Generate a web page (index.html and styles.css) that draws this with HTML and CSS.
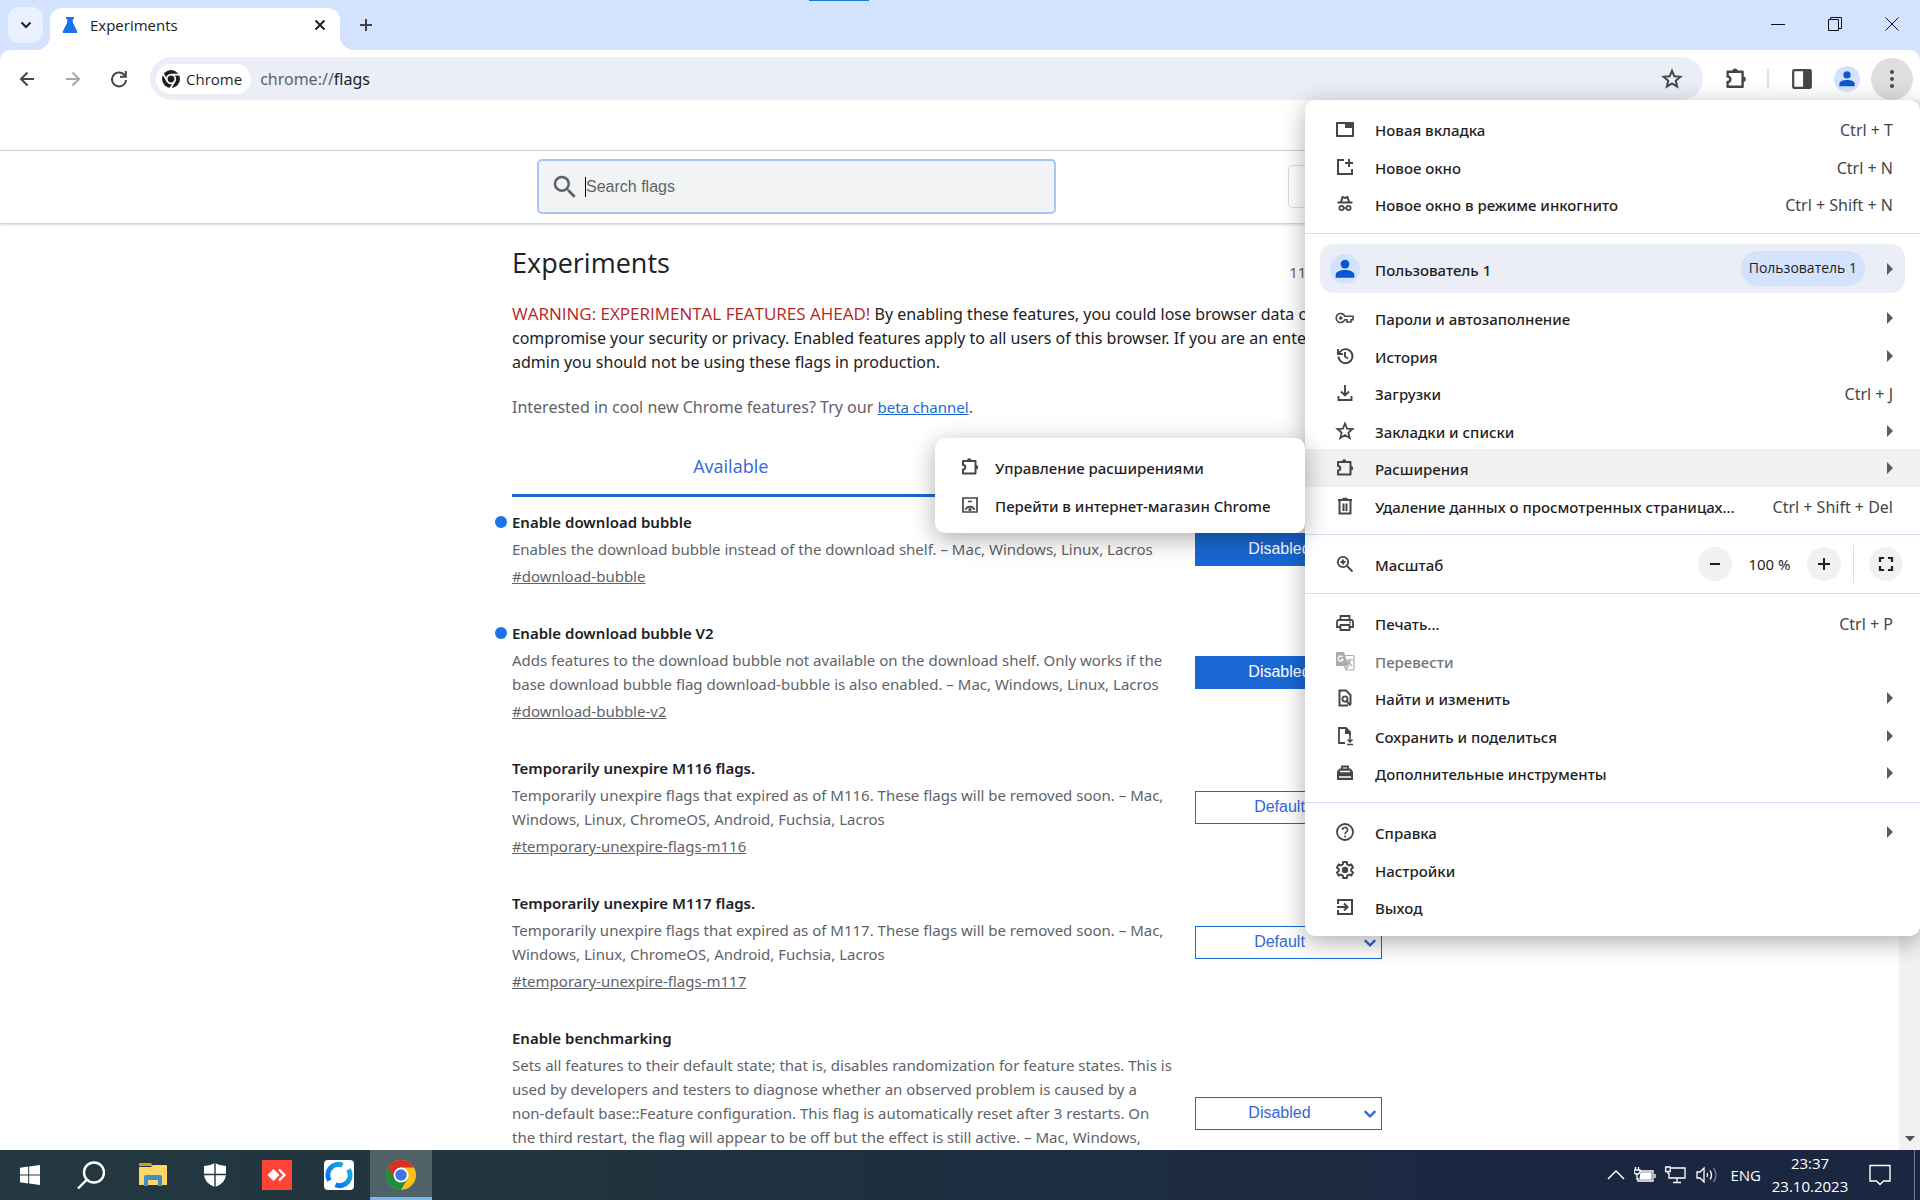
FILE: index.html
```html
<!DOCTYPE html>
<html lang="ru">
<head>
<meta charset="utf-8">
<title>Experiments</title>
<link rel="stylesheet" href="styles.css">
</head>
<body>
<svg class="sprite" aria-hidden="true">
  <symbol id="i-flask" viewBox="0 0 16 16"><path d="M4 0h8v2h-1.200v3.500L15 14q.8 2-1.200 2H2.200Q.2 16 1 14L5.200 5.500V2H4z"/></symbol>
  <symbol id="i-chevron" viewBox="0 0 12 12"><path d="M1.500 3.500 6 8l4.500-4.500" fill="none" stroke="currentColor" stroke-width="2"/></symbol>
  <symbol id="i-close" viewBox="0 0 12 12"><path d="m1.500 1.500 9 9m0-9-9 9" fill="none" stroke="currentColor" stroke-width="2"/></symbol>
  <symbol id="i-plus" viewBox="0 0 14 14"><path d="M7 1v12M1 7h12" fill="none" stroke="currentColor" stroke-width="2"/></symbol>
  <symbol id="i-minus" viewBox="0 0 14 14"><path d="M2 7h10" fill="none" stroke="currentColor" stroke-width="2"/></symbol>
  <symbol id="i-arrow" viewBox="0 0 20 20"><path d="M17 10H4m6.500-6.500L4 10l6.500 6.500" fill="none" stroke="currentColor" stroke-width="2"/></symbol>
  <symbol id="i-reload" viewBox="0 0 20 20"><path d="M17 11a7 7 0 1 1-2-5.500L16.500 7" fill="none" stroke="currentColor" stroke-width="2"/><path d="M17.800 2v6.800H11v-2h4.800V2z"/></symbol>
  <symbol id="i-chrome-mono" viewBox="0 0 20 20"><circle cx="10" cy="10" r="9"/><circle cx="10" cy="10" r="4.300" fill="none" stroke="#fff" stroke-width="1.700"/><path d="M10 5.700h9M6.300 12.100 1.800 4.500M13.700 12.100l-4.500 7.700" stroke="#fff" stroke-width="1.700"/></symbol>
  <symbol id="i-star" viewBox="0 0 20 20"><path d="m10 2.500 2.100 5.100 5.500.4-4.200 3.600 1.300 5.400-4.700-2.900L5.300 17l1.300-5.400L2.400 8l5.500-.4z" fill="none" stroke="currentColor" stroke-width="1.800"/></symbol>
  <symbol id="i-puzzle" viewBox="0 0 20 20"><path d="M3 4h12.500v12.500H3v-4c3 0 3-4.500 0-4.500z" fill="none" stroke="currentColor" stroke-width="2" stroke-linejoin="round"/><path d="M7 3.500a2.200 2.200 0 0 1 4.400 0zM16 8a2.200 2.200 0 0 1 0 4.400z"/></symbol>
  <symbol id="i-panel" viewBox="0 0 20 20"><rect x="2" y="2" width="16" height="16" rx="1" fill="none" stroke="currentColor" stroke-width="2"/><path d="M11 2h7v16h-7z"/></symbol>
  <symbol id="i-person" viewBox="0 0 20 20"><circle cx="10" cy="5.500" r="4"/><path d="M1.500 18v-2.500c0-3 4-4.500 8.500-4.500s8.500 1.500 8.500 4.500V18z"/></symbol>
  <symbol id="i-kebab" viewBox="0 0 20 20"><circle cx="10" cy="3" r="2"/><circle cx="10" cy="10" r="2"/><circle cx="10" cy="17" r="2"/></symbol>
  <symbol id="i-search" viewBox="0 0 24 24"><path d="M15.500 14h-.8l-.3-.3A6.500 6.500 0 1 0 13.700 14.400l.3.300v.8l5 5 1.500-1.500zm-6 0a4.500 4.500 0 1 1 0-9 4.500 4.500 0 0 1 0 9z"/></symbol>
  <symbol id="i-tab" viewBox="0 0 20 20"><path d="M2 4h16v13H2z" fill="none" stroke="currentColor" stroke-width="2" stroke-linejoin="round"/><path d="M10 4h8v5h-8z"/></symbol>
  <symbol id="i-window" viewBox="0 0 20 20"><path d="M9 3H3v14h14v-5M14 2v8M10 6h8" fill="none" stroke="currentColor" stroke-width="2"/></symbol>
  <symbol id="i-incognito" viewBox="0 0 20 20"><path d="M2.500 8.500h15M6 8l1.500-5 2.500 1 2.500-1L14 8" fill="none" stroke="currentColor" stroke-width="2"/><path d="M8.500 14h3" stroke="currentColor" stroke-width="1.500"/><circle cx="6.500" cy="14" r="2.200" fill="none" stroke="currentColor" stroke-width="1.700"/><circle cx="13.500" cy="14" r="2.200" fill="none" stroke="currentColor" stroke-width="1.700"/></symbol>
  <symbol id="i-key" viewBox="0 0 20 20"><path d="M9.800 8.200a4.500 4.500 0 1 0 0 3.600H12V14h4v-2.200h2V8.200z" fill="none" stroke="currentColor" stroke-width="1.600"/><circle cx="5.800" cy="10" r="1.800"/></symbol>
  <symbol id="i-history" viewBox="0 0 20 20"><path d="M3.500 10.500A7 7 0 1 0 5 5.800L3.500 7.500M3 3v5h5M10 6v4.500l3 2" fill="none" stroke="currentColor" stroke-width="1.900"/></symbol>
  <symbol id="i-download" viewBox="0 0 20 20"><path d="M10 2v10M6 8.500l4 4 4-4M3.500 13v4h13v-4" fill="none" stroke="currentColor" stroke-width="1.900"/></symbol>
  <symbol id="i-trash" viewBox="0 0 20 20"><path d="M4.500 5v12.500h11V5M3 4h14M7.500 2.800h5M8.500 7.500V15M11.500 7.500V15" fill="none" stroke="currentColor" stroke-width="2"/></symbol>
  <symbol id="i-zoom" viewBox="0 0 20 20"><circle cx="8" cy="8" r="5.200" fill="none" stroke="currentColor" stroke-width="1.800"/><path d="m12 12 5.500 5.500M8 5.500v5M5.500 8h5" fill="none" stroke="currentColor" stroke-width="1.800"/></symbol>
  <symbol id="i-print" viewBox="0 0 20 20"><path d="M5.500 6.500V3h9v3.500M5 14H2V9q0-2 2-2h12q2 0 2 2v5h-3M5.500 12h9v5h-9z" fill="none" stroke="currentColor" stroke-width="1.800"/><circle cx="15" cy="9.500" r="1"/></symbol>
  <symbol id="i-translate" viewBox="0 0 20 20"><path d="M2 1h7l4.500 14H2q-1 0-1-1V2q0-1 1-1z"/><path d="M10.500 4.500H18q1 0 1 1V18q0 1-1 1h-7l-1.500-4M12 9h6M15 7.500V9c0 2-1.500 4-3 5m0-4 5 5M11 18l2.500-3" fill="none" stroke="currentColor" stroke-width="1.200"/><path d="M7.500 6A2.500 2.500 0 1 0 8 8.500H5.800" fill="none" stroke="#fff" stroke-width="1.300"/></symbol>
  <symbol id="i-find" viewBox="0 0 20 20"><path d="M13 17.500H4.500v-15H11l4.500 4.500v9.500" fill="none" stroke="currentColor" stroke-width="2"/><circle cx="10" cy="11" r="2.600" fill="none" stroke="currentColor" stroke-width="1.800"/><path d="m11.500 13 4 4.500" stroke="currentColor" stroke-width="2"/></symbol>
  <symbol id="i-save" viewBox="0 0 20 20"><path d="M10 17H4V2h7l4 4v4" fill="none" stroke="currentColor" stroke-width="1.800"/><path d="M10 2h1.500L16 6.500V8h-6z"/><path d="M15 10v6m-2.500-2.500L15 16l2.500-2.500M12 18.500h6" fill="none" stroke="currentColor" stroke-width="1.500"/></symbol>
  <symbol id="i-tools" viewBox="0 0 20 20"><path d="M7 6.500V3.500h6v3" fill="none" stroke="currentColor" stroke-width="1.800"/><path d="M4.500 5.500h11L18 8.500V17H2V8.500z"/><path d="M5 8.500h10M4 14h12" stroke="#fff" stroke-width="1.300"/></symbol>
  <symbol id="i-help" viewBox="0 0 20 20"><circle cx="10" cy="10" r="8" fill="none" stroke="currentColor" stroke-width="1.800"/><path d="M7.500 8a2.500 2.500 0 1 1 3.700 2.100Q10 10.800 10 12.200" fill="none" stroke="currentColor" stroke-width="1.600"/><circle cx="10" cy="14.500" r="1"/></symbol>
  <symbol id="i-gear" viewBox="0 0 20 20"><path d="m8.300 2-.5 2.300-1.900 1.100-2.200-.8L2 7.600l1.800 1.500v1.800L2 12.400l1.700 3 2.200-.8 1.900 1.100.5 2.300h3.400l.5-2.300 1.900-1.100 2.200.8 1.700-3-1.800-1.500V9.100L18 7.600l-1.700-3-2.200.8-1.900-1.100-.5-2.300z" fill="none" stroke="currentColor" stroke-width="2"/><circle cx="10" cy="10" r="3.200"/></symbol>
  <symbol id="i-exit" viewBox="0 0 20 20"><path d="M3 7V3h14v14H3v-4M2 10h10.500M9 6.500l3.500 3.500L9 13.500" fill="none" stroke="currentColor" stroke-width="2"/></symbol>
  <symbol id="i-full" viewBox="0 0 16 16"><path d="M2 6V2h4M10 2h4v4M14 10v4h-4M6 14H2v-4" fill="none" stroke="currentColor" stroke-width="2.200"/></symbol>
  <symbol id="i-store" viewBox="0 0 20 20"><path d="M3 3h14v14H3zM8 6.500h4" fill="none" stroke="currentColor" stroke-width="1.700"/><path d="M5.500 15a4.700 4.700 0 0 1 9 0" fill="none" stroke="currentColor" stroke-width="1.600"/><circle cx="10" cy="14.500" r="1.600"/></symbol>
</svg>

<header class="titlebar">
  <button class="tab-search" aria-label="Поиск вкладок"><svg class="s12"><use href="#i-chevron"/></svg></button>
  <div class="tab">
    <svg class="s16 flask"><use href="#i-flask"/></svg>
    <span class="tab-title">Experiments</span>
    <button class="plain" aria-label="Закрыть"><svg class="s12"><use href="#i-close"/></svg></button>
  </div>
  <button class="plain new-tab" aria-label="Новая вкладка"><svg class="s14"><use href="#i-plus"/></svg></button>
  <div class="win-controls">
    <button class="plain" aria-label="Свернуть"><svg class="s14 line" viewBox="0 0 14 14"><path d="M0 7.500h14" stroke="#111"/></svg></button>
    <button class="plain" aria-label="Развернуть"><svg class="s14 line" viewBox="0 0 14 14" stroke="#111"><path d="M.5 2.500h10v11H.5zM2.500 2.500v-2h11v11h-3"/></svg></button>
    <button class="plain" aria-label="Закрыть окно"><svg class="s14 line" viewBox="0 0 14 14"><path d="m.5.500 13 13m0-13-13 13" stroke="#111"/></svg></button>
  </div>
  <span class="loader"></span>
</header>

<nav class="toolbar">
  <button class="plain nav-btn" aria-label="Назад"><svg class="s20"><use href="#i-arrow"/></svg></button>
  <button class="plain nav-btn forward" aria-label="Вперед"><svg class="s20"><use href="#i-arrow"/></svg></button>
  <button class="plain nav-btn" aria-label="Обновить"><svg class="s20"><use href="#i-reload"/></svg></button>
  <div class="omnibox">
    <span class="chip"><svg class="s20"><use href="#i-chrome-mono"/></svg>Chrome</span>
    <span class="url">chrome://<b>flags</b></span>
    <button class="plain" aria-label="Добавить закладку"><svg class="s22"><use href="#i-star"/></svg></button>
  </div>
  <button class="plain tool-btn" aria-label="Расширения"><svg class="s24"><use href="#i-puzzle"/></svg></button>
  <span class="tool-sep"></span>
  <button class="plain tool-btn" aria-label="Боковая панель"><svg class="s22"><use href="#i-panel"/></svg></button>
  <button class="plain avatar" aria-label="Профиль"><svg class="s18"><use href="#i-person"/></svg></button>
  <button class="plain kebab" aria-label="Меню"><svg class="s20"><use href="#i-kebab"/></svg></button>
</nav>

<div class="viewport">
  <main class="page">
    <div class="banner"></div>
    <div class="flag-header">
      <div class="flag-header-inner">
        <label class="search"><svg class="s30"><use href="#i-search"/></svg><span class="caret"></span><input type="search" placeholder="Search flags" aria-label="Search flags"></label>
        <button class="reset" aria-label="Reset all"></button>
      </div>
    </div>
    <div class="content">
      <div class="heading"><h1>Experiments</h1><span class="version">118.0.5993.89</span></div>
      <p class="blurb"><span class="warning">WARNING: EXPERIMENTAL FEATURES AHEAD!</span> By enabling these features, you could lose browser data or<br>compromise your security or privacy. Enabled features apply to all users of this browser. If you are an enterprise<br>admin you should not be using these flags in production.</p>
      <p class="promo">Interested in cool new Chrome features? Try our <a href="#beta">beta channel</a>.</p>
      <div class="tabs"><button class="flag-tab active">Available</button><button class="flag-tab" aria-label="Unavailable"></button></div>

      <section class="flag changed">
        <div class="flag-text">
          <h2>Enable download bubble</h2>
          <p>Enables the download bubble instead of the download shelf. – Mac, Windows, Linux, Lacros</p>
          <a href="#download-bubble">#download-bubble</a>
        </div>
        <div class="pick on"><select aria-label="Enable download bubble"><option>Disabled</option></select><svg class="s14"><use href="#i-chevron"/></svg></div>
      </section>
      <section class="flag changed">
        <div class="flag-text">
          <h2>Enable download bubble V2</h2>
          <p>Adds features to the download bubble not available on the download shelf. Only works if the<br>base download bubble flag download-bubble is also enabled. – Mac, Windows, Linux, Lacros</p>
          <a href="#download-bubble-v2">#download-bubble-v2</a>
        </div>
        <div class="pick on"><select aria-label="Enable download bubble V2"><option>Disabled</option></select><svg class="s14"><use href="#i-chevron"/></svg></div>
      </section>
      <section class="flag">
        <div class="flag-text">
          <h2>Temporarily unexpire M116 flags.</h2>
          <p>Temporarily unexpire flags that expired as of M116. These flags will be removed soon. – Mac,<br>Windows, Linux, ChromeOS, Android, Fuchsia, Lacros</p>
          <a href="#temporary-unexpire-flags-m116">#temporary-unexpire-flags-m116</a>
        </div>
        <div class="pick"><select aria-label="Temporarily unexpire M116 flags"><option>Default</option></select><svg class="s14"><use href="#i-chevron"/></svg></div>
      </section>
      <section class="flag">
        <div class="flag-text">
          <h2>Temporarily unexpire M117 flags.</h2>
          <p>Temporarily unexpire flags that expired as of M117. These flags will be removed soon. – Mac,<br>Windows, Linux, ChromeOS, Android, Fuchsia, Lacros</p>
          <a href="#temporary-unexpire-flags-m117">#temporary-unexpire-flags-m117</a>
        </div>
        <div class="pick"><select aria-label="Temporarily unexpire M117 flags"><option>Default</option></select><svg class="s14"><use href="#i-chevron"/></svg></div>
      </section>
      <section class="flag">
        <div class="flag-text">
          <h2>Enable benchmarking</h2>
          <p>Sets all features to their default state; that is, disables randomization for feature states. This is<br>used by developers and testers to diagnose whether an observed problem is caused by a<br>non-default base::Feature configuration. This flag is automatically reset after 3 restarts. On<br>the third restart, the flag will appear to be off but the effect is still active. – Mac, Windows,<br>Linux, ChromeOS, Android, Fuchsia, Lacros</p>
          <a href="#enable-benchmarking">#enable-benchmarking</a>
        </div>
        <div class="pick"><select aria-label="Enable benchmarking"><option>Disabled</option></select><svg class="s14"><use href="#i-chevron"/></svg></div>
      </section>
    </div>
  </main>
  <div class="scrollbar"><svg viewBox="0 0 10 6" class="scroll-arrow"><path d="M0 0h10L5 5.500z"/></svg></div>
</div>

<div class="menu" role="menu">
  <div class="group">
    <div class="row" role="menuitem"><svg class="s20"><use href="#i-tab"/></svg><span class="label">Новая вкладка</span><kbd>Ctrl + T</kbd></div>
    <div class="row" role="menuitem"><svg class="s20"><use href="#i-window"/></svg><span class="label">Новое окно</span><kbd>Ctrl + N</kbd></div>
    <div class="row" role="menuitem"><svg class="s20"><use href="#i-incognito"/></svg><span class="label">Новое окно в режиме инкогнито</span><kbd>Ctrl + Shift + N</kbd></div>
  </div>
  <div class="group profile-group">
    <div class="profile" role="menuitem"><span class="face"><svg class="s22"><use href="#i-person"/></svg></span><span class="label">Пользователь 1</span><span class="badge">Пользователь 1</span><i class="more"></i></div>
  </div>
  <div class="group no-rule">
    <div class="row" role="menuitem"><svg class="s20"><use href="#i-key"/></svg><span class="label">Пароли и автозаполнение</span><i class="more"></i></div>
    <div class="row" role="menuitem"><svg class="s20"><use href="#i-history"/></svg><span class="label">История</span><i class="more"></i></div>
    <div class="row" role="menuitem"><svg class="s20"><use href="#i-download"/></svg><span class="label">Загрузки</span><kbd>Ctrl + J</kbd></div>
    <div class="row" role="menuitem"><svg class="s20"><use href="#i-star"/></svg><span class="label">Закладки и списки</span><i class="more"></i></div>
    <div class="row active" role="menuitem"><svg class="s20"><use href="#i-puzzle"/></svg><span class="label">Расширения</span><i class="more"></i></div>
    <div class="row" role="menuitem"><svg class="s20"><use href="#i-trash"/></svg><span class="label">Удаление данных о просмотренных страницах...</span><kbd>Ctrl + Shift + Del</kbd></div>
  </div>
  <div class="group zoom-row">
    <svg class="s20"><use href="#i-zoom"/></svg><span class="label">Масштаб</span>
    <button class="round" aria-label="Уменьшить"><svg class="s14"><use href="#i-minus"/></svg></button>
    <span class="percent">100 %</span>
    <button class="round" aria-label="Увеличить"><svg class="s14"><use href="#i-plus"/></svg></button>
    <span class="zoom-sep"></span>
    <button class="round" aria-label="Во весь экран"><svg class="s16"><use href="#i-full"/></svg></button>
  </div>
  <div class="group">
    <div class="row" role="menuitem"><svg class="s20"><use href="#i-print"/></svg><span class="label">Печать...</span><kbd>Ctrl + P</kbd></div>
    <div class="row disabled" role="menuitem"><svg class="s20"><use href="#i-translate"/></svg><span class="label">Перевести</span></div>
    <div class="row" role="menuitem"><svg class="s20"><use href="#i-find"/></svg><span class="label">Найти и изменить</span><i class="more"></i></div>
    <div class="row" role="menuitem"><svg class="s20"><use href="#i-save"/></svg><span class="label">Сохранить и поделиться</span><i class="more"></i></div>
    <div class="row" role="menuitem"><svg class="s20"><use href="#i-tools"/></svg><span class="label">Дополнительные инструменты</span><i class="more"></i></div>
  </div>
  <div class="group">
    <div class="row" role="menuitem"><svg class="s20"><use href="#i-help"/></svg><span class="label">Справка</span><i class="more"></i></div>
    <div class="row" role="menuitem"><svg class="s20"><use href="#i-gear"/></svg><span class="label">Настройки</span></div>
    <div class="row" role="menuitem"><svg class="s20"><use href="#i-exit"/></svg><span class="label">Выход</span></div>
  </div>
</div>
<div class="menu submenu" role="menu">
  <div class="group">
    <div class="row" role="menuitem"><svg class="s20"><use href="#i-puzzle"/></svg><span class="label">Управление расширениями</span></div>
    <div class="row" role="menuitem"><svg class="s20"><use href="#i-store"/></svg><span class="label">Перейти в интернет-магазин Chrome</span></div>
  </div>
</div>

<footer class="taskbar">
  <button class="task" aria-label="Пуск"><svg width="20" height="20" viewBox="0 0 20 20"><path d="M0 2.800 8.200 1.600v7.900H0zM9.200 1.400 20 0v9.500H9.200zM0 10.500h8.200v8L0 17.300zM9.200 10.500H20V20L9.200 18.600z"/></svg></button>
  <button class="task" aria-label="Поиск"><svg class="line" width="28" height="28" viewBox="0 0 28 28" stroke="#fff" stroke-width="2.400"><circle cx="17" cy="11.500" r="10"/><path d="M10 18.500 1 27.500"/></svg></button>
  <button class="task" aria-label="Проводник"><svg width="28" height="24" viewBox="0 0 28 24"><path d="M0 1q0-1 1-1h11l2 3H0z" fill="#d99a0b"/><path d="M0 4h12l2-2h13q1 0 1 1v19H0z" fill="#fcd667"/><path d="M5 23v-9q0-2 2-2h14q2 0 2 2v9h-4v-6H9v6z" fill="#3f8fd0"/></svg></button>
  <button class="task" aria-label="Защитник"><svg width="22" height="24" viewBox="0 0 22 24"><path d="M11 0q5 3 11 3v8q0 9-11 13Q0 20 0 11V3q6 0 11-3z" fill="#fff"/><path d="M11 0v24M0 11.500h22" stroke="#233840" stroke-width="1.400"/></svg></button>
  <button class="task" aria-label="AnyDesk"><svg width="30" height="30" viewBox="0 0 30 30"><path d="M0 0h30v30H0z" fill="#fd4437"/><path d="m11.500 9 6 6-6 6-6-6z" fill="#fff"/><path d="m17 9.500 5.500 5.500-5.500 5.500" fill="none" stroke="#fff" stroke-width="2.200"/></svg></button>
  <button class="task" aria-label="RustDesk"><svg width="30" height="30" viewBox="0 0 30 30"><defs><linearGradient id="rd" x1="0" y1="1" x2="1" y2="0"><stop offset="0" stop-color="#0a66f5"/><stop offset="1" stop-color="#19b6df"/></linearGradient></defs><rect width="30" height="30" rx="4" fill="#fff"/><path d="M5.500 20.500A10.500 10.500 0 0 1 18.500 5.200M24.500 9.500A10.500 10.500 0 0 1 11.500 24.800" fill="none" stroke="url(#rd)" stroke-width="5"/></svg></button>
  <button class="task current" aria-label="Chrome"><svg width="30" height="30" viewBox="0 0 30 30"><circle cx="15" cy="15" r="15" fill="#fbc116"/><path d="M15 15 2 7.500A15 15 0 0 0 15 30l6.500-11.200z" fill="#1e8e3e"/><path d="M2 7.500a15 15 0 0 1 26 0H15v7.500l-6.500 3.700z" fill="#d93025"/><circle cx="15" cy="15" r="7.500" fill="#fff"/><circle cx="15" cy="15" r="5.800" fill="#3b78e7"/></svg></button>
  <div class="tray">
    <svg class="line" width="18" height="10" viewBox="0 0 18 10" stroke="#fff" stroke-width="1.500"><path d="m1 9 8-8 8 8"/></svg>
    <svg class="line" width="22" height="16" viewBox="0 0 22 16" stroke="#fff" stroke-width="1.300"><path d="M6 4h13v10H4v-3M21 7v4"/><path d="M7 6h10v6H6z" fill="#fff"/><path d="M1.500 0v3M4.500 0v3M0 3h6v2L4.500 7h-3L0 5zM3 7v6"/></svg>
    <svg class="line" width="22" height="18" viewBox="0 0 22 18" stroke="#fff" stroke-width="1.300"><path d="M6 2h14v10H4V7M12 12v4M8 16.500h8M.7 1h4.500v4.500H.7zM3 5.500V8"/></svg>
    <svg class="line" width="22" height="18" viewBox="0 0 22 18" stroke="#fff" stroke-width="1.300"><path d="M1 6h3l4-4v14l-4-4H1zM11 7q1.300 2 0 4M14 4.500q3 4.500 0 9"/><path d="M17.500 2q5 7 0 14" stroke="#73809a"/></svg>
    <span class="lang">ENG</span>
    <time class="clock">23:37<br>23.10.2023</time>
    <svg class="line" width="22" height="22" viewBox="0 0 22 22" stroke="#fff" stroke-width="1.400"><path d="M1 1.500h20v15.500h-6.500L11 20.500 7.500 17H1z"/></svg>
    <span class="peek"></span>
  </div>
</footer>
</body>
</html>
```
FILE: styles.css
```css
* { box-sizing: border-box; }
html, body { height: 100%; }
body {
  margin: 0;
  display: flex;
  flex-direction: column;
  overflow: hidden;
  position: relative;
  background: #d3e3fd;
  color: #202124;
  font: 16px/24px "Noto Sans", "Open Sans", sans-serif;
}
button, input, select { font: inherit; color: inherit; }
svg { display: block; flex: none; fill: currentColor; }
.line { fill: none; }
.sprite { position: absolute; width: 0; height: 0; }
.s12 { width: 12px; height: 12px; }
.s14 { width: 14px; height: 14px; }
.s16 { width: 16px; height: 16px; }
.s18 { width: 18px; height: 18px; }
.s20 { width: 20px; height: 20px; }
.s22 { width: 22px; height: 22px; }
.s24 { width: 24px; height: 24px; }
.s30 { width: 30px; height: 30px; }
.plain {
  display: flex;
  align-items: center;
  justify-content: center;
  flex: none;
  padding: 0;
  border: 0;
  background: none;
}

/* Title bar */
.titlebar { position: relative; display: flex; height: 50px; padding-left: 8px; flex: none; font-family: "Open Sans", sans-serif; }
.tab-search {
  display: flex;
  align-items: center;
  justify-content: center;
  width: 35px;
  height: 36px;
  margin: 7px 7px 0 0;
  padding: 0;
  border: 0;
  border-radius: 11px;
  background: #e9f1fe;
}
.tab {
  position: relative;
  display: flex;
  align-items: center;
  width: 290px;
  height: 42px;
  margin-top: 8px;
  padding: 0 14px 8px 12px;
  border-radius: 12px 12px 0 0;
  background: #fff;
}
.tab::before, .tab::after {
  content: "";
  position: absolute;
  bottom: 0;
  width: 14px;
  height: 14px;
}
.tab::before { right: 100%; background: radial-gradient(circle at 0 0, transparent 14px, #fff 14px); }
.tab::after { left: 100%; background: radial-gradient(circle at 100% 0, transparent 14px, #fff 14px); }
.flask { color: #1a73e8; }
.tab-title { flex: 1; margin-left: 12px; font-size: 15px; }
.new-tab { width: 52px; height: 50px; color: #444; }
.win-controls { display: flex; margin-left: auto; }
.win-controls .plain { width: 57px; height: 48px; }
.loader { position: absolute; left: 809px; top: 0; width: 60px; height: 1px; background: #1a7fd0; }

/* Toolbar */
.toolbar {
  display: flex;
  align-items: center;
  flex: none;
  height: 50px;
  padding: 7px 7px 0 4px;
  border-radius: 10px 10px 0 0;
  background: #fff;
  color: #444746;
}
.nav-btn { width: 46px; height: 43px; }
.forward { color: #a9a9a9; }
.forward svg { transform: scaleX(-1); }
.omnibox {
  flex: 1;
  display: flex;
  align-items: center;
  height: 43px;
  margin-left: 8px;
  padding: 0 20px 0 6px;
  border-radius: 22px;
  background: #ebeef7;
}
.chip {
  display: flex;
  align-items: center;
  gap: 5px;
  height: 30px;
  padding: 0 9px 0 5px;
  border-radius: 15px;
  background: #fff;
  color: #1f1f1f;
  font: 15px/24px "Open Sans", sans-serif;
}
.url { flex: 1; margin-left: 9px; color: #5f6368; }
.url b { color: #202124; font-weight: 400; }
.tool-btn { width: 46px; height: 43px; margin-left: 10px; }
.tool-sep { width: 2px; height: 20px; margin-left: 8px; background: #d3e3fd; }
.avatar { width: 26px; height: 26px; margin: 0 11px 0 9px; border-radius: 50%; background: #d3e3fd; color: #0b57d0; }
.kebab { width: 42px; height: 42px; border-radius: 50%; background: #dedede; }

/* Page */
.viewport { flex: 1; min-height: 0; display: flex; background: #fff; }
.page { flex: 1; overflow: hidden; }
.scrollbar { display: flex; align-items: flex-end; justify-content: center; width: 21px; padding-bottom: 8px; background: #f1f1f1; color: #505050; }
.scroll-arrow { width: 10px; height: 6px; }
.banner { height: 51px; border-bottom: 1px solid #dadce0; }
.flag-header { height: 72px; box-shadow: 0 1px 3px rgba(60, 64, 67, .35); }
.flag-header-inner { display: flex; align-items: center; justify-content: space-between; width: 875px; height: 71px; margin: 0 auto; padding-left: 25px; }
.search {
  display: flex;
  align-items: center;
  width: 519px;
  height: 55px;
  padding: 0 11px;
  border: 2px solid #a8c7f0;
  border-radius: 5px;
  background: #f1f3f4;
  color: #5f6368;
}
.caret { width: 1px; height: 20px; margin-left: 5px; background: #000; }
.search input { flex: 1; padding: 0; border: 0; outline: 0; background: none; font: 16px/20px "Liberation Sans", Arial, sans-serif; }
.search input::placeholder { color: #5f6368; opacity: 1; }
.reset { width: 99px; height: 43px; border: 1px solid #dadce0; border-radius: 4px; background: #fff; color: #1967d2; }

.content { width: 875px; margin: 0 auto; white-space: nowrap; }
.heading { display: flex; justify-content: space-between; padding-top: 18px; }
h1 { margin: 0; font: 400 27px/44px "Open Sans", sans-serif; }
.version { padding-top: 19px; color: #5f6368; font-size: 15px; }
.blurb { margin: 17px 0 0; }
.warning { color: #b3261e; font: 17px/24px "Open Sans", sans-serif; }
.promo { margin: 21px 0 0; color: #5f6368; }
.promo a { color: #1967d2; font-size: 15px; }
.tabs { display: flex; margin-top: 30px; }
.flag-tab { flex: 1; height: 48px; padding: 0 0 11px; border: 0; border-bottom: 3px solid transparent; background: none; color: #5f6368; font: 18px/24px "Open Sans", sans-serif; }
.flag-tab.active { border-color: #1967d2; color: #3367d6; }
.flag { display: flex; align-items: center; gap: 10px; padding: 13px 5px 20px 0; }
.flag-text { position: relative; width: 673px; }
.changed .flag-text::before {
  content: "";
  position: absolute;
  left: -17px;
  top: 6px;
  width: 12px;
  height: 12px;
  border-radius: 50%;
  background: #1a73e8;
}
.flag h2 { margin: 0; font-size: 15px; line-height: 24px; font-weight: 600; }
.flag p { margin: 3px 0; color: #5f6368; font-size: 15px; }
.flag a { color: #5f6368; font-size: 15px; }
.pick { position: relative; flex: 1; color: #3367d6; }
.pick select {
  display: block;
  width: 100%;
  height: 33px;
  padding: 0 18px 0 0;
  border: 1px solid #1967d2;
  border-radius: 0;
  appearance: none;
  background: #fff;
  font: 16px/20px "Liberation Sans", Arial, sans-serif;
  text-align-last: center;
}
.pick svg { position: absolute; right: 5px; top: 10px; }
.pick.on { color: #fff; }
.pick.on select { background: #1967d2; }

/* Menus */
.menu {
  position: absolute;
  right: 0;
  top: 100px;
  width: 615px;
  border-radius: 10px;
  background: #fff;
  box-shadow: 0 6px 24px rgba(0, 0, 0, .32);
  color: #1f1f1f;
  font-size: 15px;
}
.submenu { right: 615px; top: 438px; width: 370px; }
.group { padding: 10px 0; }
.group + .group { border-top: 1px solid #d3dff0; }
.group.profile-group { padding-bottom: 6px; }
.group.no-rule { padding-top: 0; border-top: 0; }
.row, .profile, .zoom-row { display: flex; align-items: center; }
.row { height: 37px; padding: 0 27px 0 30px; }
.row:nth-child(odd) { height: 38px; }
.submenu .row { padding: 0 0 0 25px; }
.row > svg, .zoom-row > svg { color: #444746; }
.label { flex: 1; margin-left: 20px; padding-top: 2px; font-weight: 500; white-space: nowrap; }
.submenu .label { margin-left: 15px; }
kbd { padding-top: 2px; color: #444746; font: inherit; font-size: 16px; white-space: nowrap; }
.row.active { background: #f1f1f1; }
.row.disabled { color: #757575; }
.row.disabled > svg { color: #aaa; }
.more { width: 0; border: 6px solid transparent; border-left-color: #5a5d5c; border-right-width: 0; }
.profile { height: 49px; margin: 0 15px; padding: 0 12px 0 10px; border-radius: 14px; background: #ebeef7; }
.face { display: flex; align-items: center; justify-content: center; width: 30px; height: 30px; border-radius: 50%; background: #d3e3fd; color: #0b57d0; }
.profile .label { margin-left: 15px; }
.badge { height: 35px; margin-right: 22px; padding: 0 8px; border-radius: 17px; background: #d3e3fd; font: 14px/34px "Open Sans", sans-serif; }
.group.zoom-row { height: 59px; padding: 0 17px 0 30px; }
.round { display: flex; align-items: center; justify-content: center; width: 34px; height: 34px; padding: 0; border: 0; border-radius: 50%; background: #f1f1f1; }
.percent { width: 75px; text-align: center; }
.zoom-sep { width: 1px; height: 38px; margin: 0 15px 0 12px; background: #d3dff0; }

/* Taskbar */
.taskbar { display: flex; flex: none; height: 50px; background: linear-gradient(90deg, #233840 0, #20343f 30%, #1b2842 75%, #1b2640 100%); color: #fff; }
.task { display: flex; align-items: center; justify-content: center; width: 62px; padding: 0; border: 0; background: none; }
.task:first-child { width: 60px; }
.task.current { border-top: 3px solid transparent; border-bottom: 3px solid #76b9ed; background: #4f6268; }
.tray { display: flex; align-items: center; gap: 9px; margin-left: auto; font: 15px/24px "Open Sans", sans-serif; }
.lang { margin-left: 3px; }
.clock { width: 80px; margin: 0 10px 0 0; text-align: center; line-height: 23px; }
.peek { width: 1px; height: 50px; margin: 0 5px 0 14px; background: #6f7a8c; }
```
